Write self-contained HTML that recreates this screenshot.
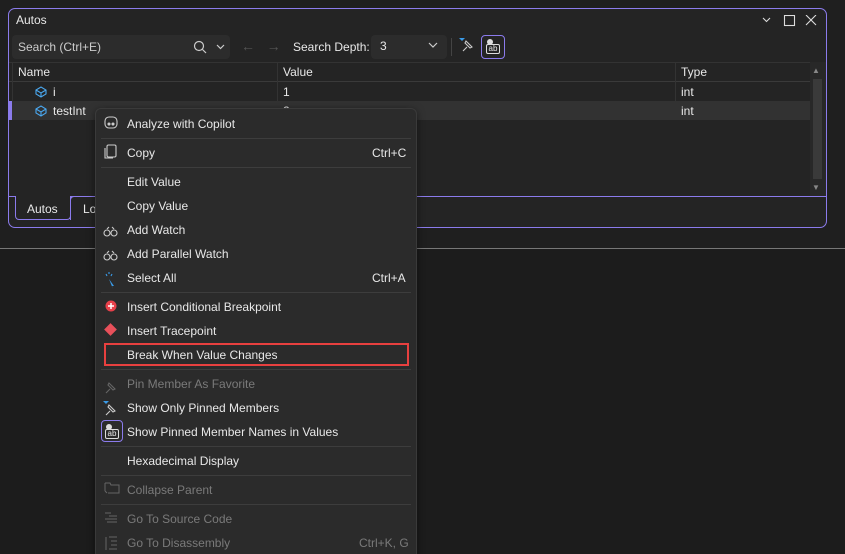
<!DOCTYPE html><html><head><style>
*{margin:0;padding:0;box-sizing:border-box}
html,body{width:845px;height:554px;overflow:hidden}
body{background:#1f1f1f;font-family:"Liberation Sans",sans-serif;font-size:12px;color:#e8e8e8;position:relative}
.a{position:absolute}
.t{position:absolute;white-space:nowrap;line-height:14px}
.sep{position:absolute;left:5px;right:5px;height:1px;background:#3d3d3d}
.dim{color:#7a7a7a}
</style></head><body>
<div class="a" style="left:0;top:248px;width:845px;height:306px;background:#1c1c1c;border-top:1px solid #777"></div>
<div class="a" style="left:8px;top:8px;width:819px;height:220px;border:1px solid #8b7bec;border-radius:7px;background:#242424"></div>
<div class="t" style="left:16px;top:13px">Autos</div>
<svg class="a" style="left:762px;top:15px" width="60" height="14" fill="none" stroke="#ddd" stroke-width="1.1"><path d="M1 3l3.5 3.5L8 3"/><rect x="22.5" y="0.5" width="10" height="10"/><path d="M44 0l10 10M54 0L44 10"/></svg>
<div class="a" style="left:12px;top:35px;width:218px;height:24px;background:#2c2c2c;border-radius:4px"></div>
<div class="t" style="left:18px;top:40px;color:#ccc">Search (Ctrl+E)</div>
<svg class="a" style="left:193px;top:40px" width="36" height="14"><circle cx="6" cy="6" r="4.5" fill="none" stroke="#ccc" stroke-width="1.2"/><path d="M9.5 9.5L13 13" stroke="#ccc" stroke-width="1.2"/><path d="M24 5l3.5 3.5L31 5" fill="none" stroke="#ccc" stroke-width="1.2"/></svg>
<div class="t" style="left:241px;top:39px;color:#555;font-size:14px">←&nbsp;&nbsp;&nbsp;→</div>
<div class="t" style="left:293px;top:40px">Search Depth:</div>
<div class="a" style="left:371px;top:35px;width:76px;height:24px;background:#2c2c2c;border-radius:4px"></div>
<div class="t" style="left:380px;top:39px">3</div>
<svg class="a" style="left:428px;top:42px" width="12" height="8"><path d="M1 1l4 4 4-4" fill="none" stroke="#ccc" stroke-width="1.2"/></svg>
<div class="a" style="left:451px;top:38px;width:1px;height:18px;background:#444"></div>
<svg class="a" style="left:457px;top:37px" width="18" height="18"><path d="M2 1h6l-3 3z" fill="#3a9be8"/><path d="M6 14l4-4M8 6l5 5 2-1-6-6z" fill="none" stroke="#ccc" stroke-width="1.1"/></svg>
<div class="a" style="left:481px;top:35px;width:24px;height:24px;border:1px solid #8b7bec;border-radius:4px"></div>
<div class="a" style="left:486px;top:44px;width:14px;height:10px;border:1px solid #ddd;border-radius:2px;font-size:8px;line-height:8px;text-align:center">ab</div>
<div class="a" style="left:487px;top:39px;width:6px;height:6px;background:#ddd;border-radius:3px"></div>
<div class="a" style="left:9px;top:62px;width:801px;height:1px;background:#333"></div>
<div class="a" style="left:9px;top:81px;width:801px;height:1px;background:#3a3a3a"></div>
<div class="a" style="left:277px;top:62px;width:1px;height:58px;background:#333"></div>
<div class="a" style="left:675px;top:62px;width:1px;height:58px;background:#333"></div>
<div class="a" style="left:12px;top:62px;width:1px;height:58px;background:#333"></div>
<div class="t" style="left:18px;top:65px">Name</div>
<div class="t" style="left:283px;top:65px">Value</div>
<div class="t" style="left:681px;top:65px">Type</div>
<div class="a" style="left:9px;top:101px;width:801px;height:19px;background:#323232"></div>
<div class="a" style="left:9px;top:101px;width:3px;height:19px;background:#8b7bec"></div>
<svg class="a" style="left:34px;top:85px" width="14" height="32"><path d="M2 5l5-3 5 3v4l-5 3-5-3zM2 5l5 3 5-3M7 8v4" fill="none" stroke="#4aa8f0" stroke-width="1.1"/><path d="M2 24l5-3 5 3v4l-5 3-5-3zM2 24l5 3 5-3M7 27v4" fill="none" stroke="#4aa8f0" stroke-width="1.1"/></svg>
<div class="t" style="left:53px;top:85px">i</div>
<div class="t" style="left:53px;top:104px">testInt</div>
<div class="t" style="left:283px;top:85px">1</div>
<div class="t" style="left:283px;top:104px">2</div>
<div class="t" style="left:681px;top:85px">int</div>
<div class="t" style="left:681px;top:104px">int</div>
<div class="a" style="left:810px;top:62px;width:16px;height:134px;background:#282828"></div>
<div class="a" style="left:813px;top:79px;width:9px;height:100px;background:#3a3a3a"></div>
<div class="t" style="left:812px;top:64px;font-size:8px;color:#888">▲</div>
<div class="t" style="left:812px;top:181px;font-size:8px;color:#888">▼</div>
<div class="a" style="left:9px;top:196px;width:817px;height:1px;background:#8b7bec"></div>
<div class="a" style="left:15px;top:196px;width:56px;height:24px;border:1px solid #8b7bec;border-top:none;border-radius:0 0 4px 4px;background:#242424"></div>
<div class="t" style="left:27px;top:202px">Autos</div>
<div class="a" style="left:70px;top:196px;width:40px;height:24px;border:1px solid #8b7bec;border-bottom:none;border-right:none;border-radius:4px 0 0 0"></div>
<div class="t" style="left:83px;top:202px">Lo</div>
<div class="a" style="left:95px;top:108px;width:322px;height:460px;background:#2b2b2b;border:1px solid #3a3a3a;border-radius:6px;box-shadow:0 2px 8px rgba(0,0,0,.5)">
<div class="sep" style="top:29px"></div>
<div class="sep" style="top:58px"></div>
<div class="sep" style="top:183px"></div>
<div class="sep" style="top:260px"></div>
<div class="sep" style="top:337px"></div>
<div class="sep" style="top:366px"></div>
<div class="sep" style="top:395px"></div>
</div>
<div class="a" style="left:104px;top:343px;width:305px;height:23px;border:2px solid #e8403f"></div>
<svg class="a" style="left:103px;top:115px" width="20" height="440" fill="none" stroke="#ccc" stroke-width="1.1">
<rect x="2" y="2" width="12" height="11" rx="4"/><circle cx="6" cy="9" r="1" fill="#ccc"/><circle cx="10" cy="9" r="1" fill="#ccc"/>
<rect x="4" y="30" width="9" height="12" rx="1.5"/><path d="M2 33v10h8"/>
<g transform="translate(0,110)"><circle cx="4" cy="8" r="3"/><circle cx="11" cy="8" r="3"/><path d="M4 4l2-2M11 4l-2-2"/></g>
<g transform="translate(0,134)"><circle cx="4" cy="8" r="3"/><circle cx="11" cy="8" r="3"/><path d="M4 4l2-2M11 4l-2-2"/></g>
<path d="M6 164l5 7-2 0 1 3z" fill="#3a9be8" stroke="none"/><path d="M3 159l1 2M6 157v2M9 159l-1 2" stroke="#3a9be8"/>
<circle cx="8" cy="191" r="5.5" fill="#e8404a" stroke="none"/><path d="M5 191h6M8 188v6" stroke="#fff" stroke-width="1.5"/>
<rect x="3" y="210" width="9" height="9" transform="rotate(45 7.5 214.5)" fill="#e8505a" stroke="none"/>
<path d="M3 278l4-4M5 270l5 5 2-1-6-6z" stroke="#666"/>
<path d="M0 286h6l-3 3z" fill="#3a9be8" stroke="none"/><path d="M3 300l4-4M5 292l5 5 2-1-6-6z"/>
</svg>
<div class="a" style="left:101px;top:420px;width:22px;height:22px;border:1px solid #8b7bec;border-radius:4px"></div>
<div class="a" style="left:105px;top:429px;width:14px;height:10px;border:1px solid #ddd;border-radius:2px;font-size:8px;line-height:8px;text-align:center">ab</div>
<div class="a" style="left:106px;top:424px;width:6px;height:6px;background:#ddd;border-radius:3px"></div>
<svg class="a" style="left:103px;top:480px" width="20" height="74" fill="none" stroke="#666" stroke-width="1"><path d="M2 3h5l1 2h8v8H5M2 3v8M2 11l2 2"/><path d="M2 33h6M6 36h8M2 39h12M4 42h10"/><path d="M3 57v13M6 57h8M8 61h6M8 65h6M6 69h8"/></svg>
<div class="t" style="left:127px;top:117px">Analyze with Copilot</div>
<div class="t" style="left:127px;top:146px">Copy</div><div class="t" style="left:372px;top:146px">Ctrl+C</div>
<div class="t" style="left:127px;top:175px">Edit Value</div>
<div class="t" style="left:127px;top:199px">Copy Value</div>
<div class="t" style="left:127px;top:223px">Add Watch</div>
<div class="t" style="left:127px;top:247px">Add Parallel Watch</div>
<div class="t" style="left:127px;top:271px">Select All</div><div class="t" style="left:372px;top:271px">Ctrl+A</div>
<div class="t" style="left:127px;top:300px">Insert Conditional Breakpoint</div>
<div class="t" style="left:127px;top:324px">Insert Tracepoint</div>
<div class="t" style="left:127px;top:348px">Break When Value Changes</div>
<div class="t dim" style="left:127px;top:377px">Pin Member As Favorite</div>
<div class="t" style="left:127px;top:401px">Show Only Pinned Members</div>
<div class="t" style="left:127px;top:425px">Show Pinned Member Names in Values</div>
<div class="t" style="left:127px;top:454px">Hexadecimal Display</div>
<div class="t dim" style="left:127px;top:483px">Collapse Parent</div>
<div class="t dim" style="left:127px;top:512px">Go To Source Code</div>
<div class="t dim" style="left:127px;top:536px">Go To Disassembly</div><div class="t dim" style="left:359px;top:536px">Ctrl+K, G</div>
</body></html>
